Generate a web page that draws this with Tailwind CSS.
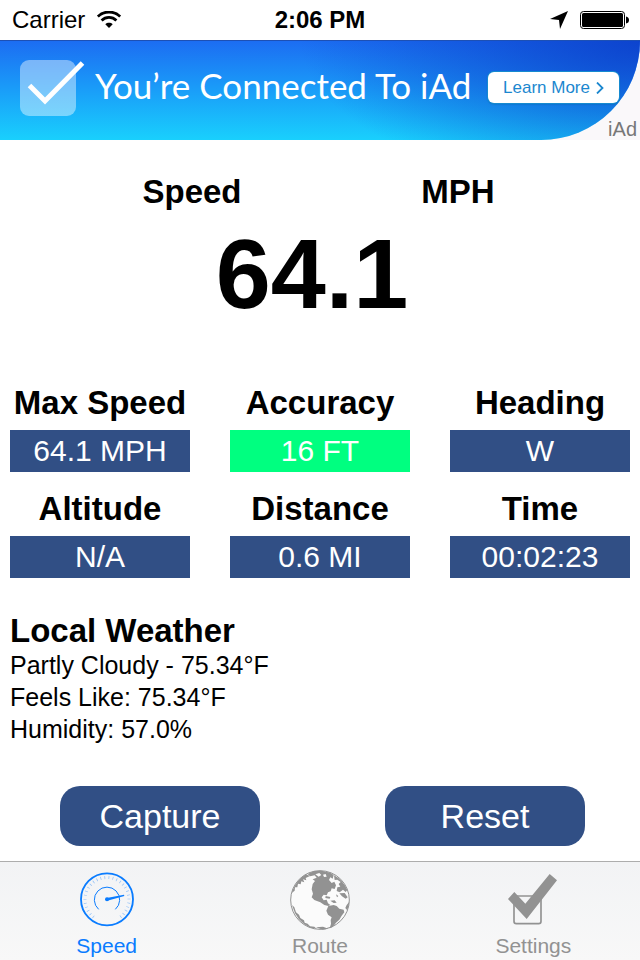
<!DOCTYPE html>
<html lang="en">
<head>
<meta charset="utf-8">
<meta name="viewport" content="width=device-width, initial-scale=1">
<title>Speed</title>
<script src="https://cdn.jsdelivr.net/npm/@tailwindcss/browser@4"></script>
</head>
<body class="flex min-h-screen flex-col bg-white font-['Liberation_Sans',Arial,sans-serif] text-black">

<header class="grid h-10 grid-cols-[1fr_auto_1fr] items-center px-3 text-[24px] leading-10">
  <div class="flex items-center gap-3">
    <span>Carrier</span>
    <svg class="h-[18px] w-6" viewBox="0 0 24 18" fill="none" stroke="#000" aria-label="Wi-Fi">
      <path d="M.8 5.6C7-.5 17-.5 23.200 5.600" stroke-width="2.800"/>
      <path d="M4.600 9.500C8.800 5.400 15.200 5.400 19.400 9.500" stroke-width="2.800"/>
      <path d="M8.300 13.200C10.400 11.300 13.600 11.300 15.700 13.200L12 17Z" fill="#000" stroke="none"/>
    </svg>
  </div>
  <time class="font-bold">2:06 PM</time>
  <div class="flex items-center justify-end gap-3">
    <svg class="h-[18px] w-[18px]" viewBox="0 0 18 18" aria-label="Location"><path d="M18 0L10 18L9 9L0 8Z"/></svg>
    <svg class="-mr-[2px] h-5 w-[50px]" viewBox="0 0 50 20" aria-label="Battery">
      <rect x=".5" y="1.500" width="44" height="17" rx="3" fill="none" stroke="#000"/>
      <rect x="2" y="3" width="41" height="14" rx="1.500"/>
      <path d="M46 6.500Q49 7 49 10T46 13.500Z"/>
    </svg>
  </div>
</header>

<aside class="relative h-[100px] bg-[#faf8fa]" aria-label="Advertisement">
  <div class="flex h-full items-center rounded-br-[99px] border-t border-[#1d50b4] bg-[radial-gradient(ellipse_340px_150px_at_100%_0%,#0b3fcae6_0%,#0b3fca80_45%,#0b3fca00_100%),linear-gradient(#1c6df2,#1a99f8_45%,#19d0fd)] pr-[21px] pl-5">
    <svg class="-mt-[6px] h-[60px] w-[66px] shrink-0" viewBox="0 0 66 60" aria-hidden="true">
      <rect x="0" y="2" width="56" height="56" rx="9" fill="#fff" fill-opacity=".42"/>
      <path d="M9.500 27.500L25 43L62.500 5" fill="none" stroke="#fff" stroke-width="5"/>
    </svg>
    <p class="-mt-3 ml-[9px] grow font-['Lato',sans-serif] text-[35px] leading-[48px] whitespace-nowrap text-white">You’re Connected To iAd</p>
    <a href="#" class="-mt-[6px] flex h-[31px] w-[131px] shrink-0 items-center justify-center gap-[6px] rounded-md bg-white text-[17px] leading-5 text-[#1b87cf] shadow-[0_0_0_1px_#168ad0,0_1px_2px_#0669a8]">Learn More
      <svg class="h-3 w-2" viewBox="0 0 8 12" fill="none" stroke="#1b87cf" stroke-width="1.800" aria-hidden="true"><path d="M1 0.500L6.500 6L1 11.500"/></svg>
    </a>
  </div>
  <span class="absolute right-[3px] bottom-0 text-[20px] leading-[22px] text-[#777]">iAd</span>
</aside>

<main class="flex grow flex-col pt-8 pb-[15px]">
  <div class="grid grid-cols-2 pr-[49px] pl-[59px] text-center text-[33px] leading-10 font-bold">
    <h1>Speed</h1>
    <span>MPH</span>
  </div>
  <output class="mt-3 pr-4 text-center text-[99px] leading-[100px] font-bold">64.1</output>

  <dl class="mt-[59px] grid grid-cols-3 gap-x-10 gap-y-[17px] px-[10px] text-center [&_dd]:bg-[#314f85] [&_dd]:text-[30px] [&_dd]:leading-[42px] [&_dd]:text-white [&_dt]:pb-[7px] [&_dt]:text-[33px] [&_dt]:leading-10 [&_dt]:font-bold [&_dt]:whitespace-nowrap">
    <div><dt>Max Speed</dt><dd>64.1 MPH</dd></div>
    <div><dt>Accuracy</dt><dd class="bg-[#00ff80]!">16 FT</dd></div>
    <div><dt>Heading</dt><dd>W</dd></div>
    <div><dt>Altitude</dt><dd>N/A</dd></div>
    <div><dt>Distance</dt><dd>0.6 MI</dd></div>
    <div><dt>Time</dt><dd>00:02:23</dd></div>
  </dl>

  <section class="mt-[35px] px-[10px] text-[25px] leading-8">
    <h2 class="text-[33px] leading-9 font-bold">Local Weather</h2>
    <p>Partly Cloudy - 75.34°F</p>
    <p>Feels Like: 75.34°F</p>
    <p>Humidity: 57.0%</p>
  </section>

  <div class="mt-auto flex justify-between pr-[55px] pl-[60px] text-[34px] text-white">
    <button type="button" class="h-[60px] w-[200px] rounded-[20px] bg-[#314f85]">Capture</button>
    <button type="button" class="h-[60px] w-[200px] rounded-[20px] bg-[#314f85]">Reset</button>
  </div>
</main>

<nav class="grid grid-cols-3 border-t border-[#adadad] bg-linear-to-b from-[#f2f3f5] to-[#f8f8f8] pt-2 pb-[2px] text-[21px] leading-6 text-[#929292]">
  <a href="#" aria-current="page" class="flex flex-col items-center gap-1 text-[#0a7cff]">
    <svg class="size-[60px]" viewBox="48 45 180 180" fill="none" stroke="currentColor" aria-hidden="true">
      <circle cx="138" cy="133" r="78" stroke-width="5.500"/>
      <path d="M98 186A66 66 0 1 1 178 186" stroke-width="9" stroke-dasharray="2 10" stroke-opacity=".45"/>
      <path d="M113 163A38 38 0 1 1 163 163" stroke-width="3"/>
      <circle cx="138" cy="133" r="6" fill="currentColor" stroke="none"/>
      <path d="M137 129L189 119L190 123L139 137Z" fill="currentColor" stroke="none"/>
    </svg>
    <span>Speed</span>
  </a>
  <a href="#" class="flex flex-col items-center gap-1">
    <svg class="size-[60px]" viewBox="59 46 180 180" fill="currentColor" aria-hidden="true">
      <circle cx="149" cy="136" r="88" fill="#fbfbfb" stroke="currentColor" stroke-width="3"/>
      <path d="M64 115Q74 84 96 66L107 59L119 64L106 70L108 77L98 74L102 83L93 80L91 89L83 87L81 98L74 98L73 108Z"/>
      <path d="M112 58L131 49L154 48L180 54L190 61L187 72L180 68L176 76L184 85L192 81L197 92L193 103L184 101L181 110L173 113L169 122L160 120L154 128L160 137L169 135L173 146L180 151L174 154L162 151L150 143L132 136L124 128L128 117L124 104L127 88L134 79L127 74L139 69L133 62L119 65Z"/>
      <path d="M191 62Q218 76 231 106L226 112L218 105L208 113L199 109L201 98L210 96L205 88L211 82L201 75L193 76Z"/>
      <path d="M207 116L223 115L232 128L226 132L215 125ZM180 138L193 137L199 144L190 145ZM166 124L180 127L178 132L165 130ZM197 119L204 124L200 128Z"/>
      <path d="M174 154L190 151L199 154L207 162L220 165L222 173L214 183L207 195L197 204L187 217L178 221L182 207L181 196L184 188L173 180L168 168Z"/>
      <path d="M229 151L237 141L234 158L230 166L225 160Z"/>
      <path d="M65 151L72 158L77 173L86 180L90 190L101 197L103 204L112 207L119 215L132 216L139 222L120 219Q78 201 65 151ZM137 218L158 216L174 222L157 225Z"/>
      <path d="M135 59L147 55L153 61L145 66ZM158 60L166 58L169 66L161 67Z" fill="#fbfbfb"/>
    </svg>
    <span>Route</span>
  </a>
  <a href="#" class="flex flex-col items-center gap-1">
    <svg class="size-[60px]" viewBox="69 45 180 180" fill="none" aria-hidden="true">
      <rect x="102" y="123" width="81" height="83" rx="7" stroke="currentColor" stroke-width="5"/>
      <path d="M84 132L103 111L136 146L209 57L231 76L140 192Z" fill="currentColor"/>
    </svg>
    <span>Settings</span>
  </a>
</nav>
</body>
</html>
